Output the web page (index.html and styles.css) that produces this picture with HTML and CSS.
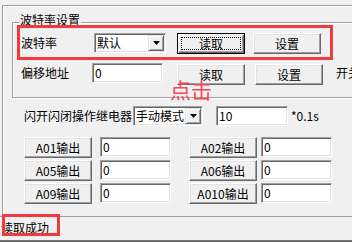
FILE: index.html
```html
<!DOCTYPE html>
<html>
<head>
<meta charset="utf-8">
<link rel="stylesheet" href="styles.css">
</head>
<body>
<div class="frame">
  <div class="group">
    <div class="legend">波特率设置</div>
    <div class="row baud">
      <span class="label label-baud">波特率</span>
      <div class="combo combo-baud"><span class="combo-text">默认</span><span class="drop"><svg width="7" height="4" viewBox="0 0 7 4"><polygon points="0,0 7,0 3.5,4" fill="#000"/></svg></span></div>
      <button class="btn btn-default btn-read1">读取</button>
      <button class="btn btn-set1">设置</button>
    </div>
    <div class="row offset">
      <span class="label label-offset">偏移地址</span>
      <div class="edit edit-offset">0</div>
      <button class="btn btn-read2">读取</button>
      <button class="btn btn-set2">设置</button>
      <span class="label label-switch">开关</span>
    </div>
  </div>
  <div class="row relay">
    <span class="label label-relay">闪开闪闭操作继电器</span>
    <div class="combo combo-relay"><span class="combo-text">手动模式</span><span class="drop"><svg width="7" height="4" viewBox="0 0 7 4"><polygon points="0,0 7,0 3.5,4" fill="#000"/></svg></span></div>
    <div class="edit edit-time">10</div>
    <span class="unit">*0.1s</span>
  </div>
  <div class="outputs">
    <div class="out-row">
      <button class="btn">A01输出</button><div class="edit out-edit">0</div>
      <button class="btn out-btn2">A02输出</button><div class="edit out-edit2">0</div>
    </div>
    <div class="out-row">
      <button class="btn">A05输出</button><div class="edit out-edit">0</div>
      <button class="btn out-btn2">A06输出</button><div class="edit out-edit2">0</div>
    </div>
    <div class="out-row">
      <button class="btn">A09输出</button><div class="edit out-edit">0</div>
      <button class="btn out-btn2">A010输出</button><div class="edit out-edit2">0</div>
    </div>
  </div>
</div>
<div class="status"><span class="status-text">读取成功</span></div>
<div class="bottom-edge"></div>
<div class="annot-click">点击</div>
<div class="annot-status"></div>
</body>
</html>
```
FILE: styles.css
```css
* { box-sizing: border-box; }
html, body { margin: 0; padding: 0; }
body {
  width: 352px;
  height: 242px;
  overflow: hidden;
  position: relative;
  background: #f0f0f0;
  color: #000;
  font-family: "Noto Sans CJK SC", sans-serif;
  font-size: 12px;
  line-height: 14px;
}
.frame {
  margin: 5px 0 0 2px;
  height: 211px;
  border-top: 1px solid #a0a0a0;
  border-left: 1px solid #a0a0a0;
  box-shadow: inset 1px 1px 0 #fff;
}
.group {
  margin: 16px 0 0 9px;
  width: 400px;
  height: 76px;
  border: 1px solid #a0a0a0;
  box-shadow: inset 1px 1px 0 #fff, 1px 1px 0 #fff;
}
.legend {
  margin: -10px 0 0 6px;
  padding: 0 1px;
  width: fit-content;
  height: 14px;
  background: #f0f0f0;
}
.row { display: flex; }
.label { line-height: 20px; white-space: nowrap; }
.baud {
  margin: 1px 0 0 7px;
  width: 310px;
  height: 29px;
  padding-top: 5px;
  align-items: flex-start;
  outline: 3px solid #f03a3c;
}
.label-baud { width: 74px; padding-left: 1px; }
.combo {
  display: flex;
  height: 20px;
  padding: 1px;
  background: #fff;
  border: 1px solid;
  border-color: #a0a0a0 #fff #fff #a0a0a0;
  box-shadow: inset 1px 1px 0 #696969, inset -1px -1px 0 #e3e3e3;
}
.combo-text { flex: 1; padding-left: 1px; line-height: 16px; white-space: nowrap; overflow: hidden; }
.drop {
  width: 16px;
  height: 16px;
  display: flex;
  align-items: center;
  justify-content: center;
  background: #f0f0f0;
  border: 1px solid;
  border-color: #e3e3e3 #696969 #696969 #e3e3e3;
  box-shadow: inset 1px 1px 0 #fff, inset -1px -1px 0 #a0a0a0;
}
.drop svg { display: block; }
.combo-baud { width: 72px; }
.btn {
  width: 68px;
  height: 21px;
  padding: 0;
  margin: 0;
  font: inherit;
  color: #000;
  background: #f0f0f0;
  border: 1px solid;
  border-color: #fff #696969 #696969 #fff;
  box-shadow: inset -1px -1px 0 #a0a0a0, inset 1px 1px 0 #e3e3e3;
  white-space: nowrap;
}
.btn-default {
  border: 1px solid #000;
  box-shadow: inset 1px 1px 0 #fff, inset -1px -1px 0 #696969, inset -2px -2px 0 #a0a0a0;
  outline: 1px dotted #000;
  outline-offset: -5px;
}
.btn-read1 { margin-left: 11px; }
.btn-set1 { margin-left: 8px; }
.edit {
  height: 20px;
  padding: 0 2px;
  line-height: 18px;
  background: #fff;
  border: 1px solid;
  border-color: #a0a0a0 #fff #fff #a0a0a0;
  box-shadow: inset 1px 1px 0 #696969, inset -1px -1px 0 #e3e3e3;
}
.offset { margin: 6px 0 0 7px; align-items: flex-start; }
.label-offset { width: 72px; padding-left: 1px; }
.edit-offset { width: 71px; }
.btn-read2 { margin: 1px 0 0 14px; }
.btn-set2 { margin: 1px 0 0 10px; }
.label-switch { margin-left: 13px; }
.relay { margin: 8px 0 0 21px; height: 20px; align-items: center; }
.label-relay { width: 109px; }
.combo-relay { width: 70px; }
.edit-time { width: 72px; margin-left: 13px; }
.unit { margin-left: 3px; line-height: 20px; }
.outputs { margin: 11px 0 0 21px; display: flex; flex-direction: column; gap: 2px; }
.out-row { display: flex; align-items: flex-start; height: 21px; }
.out-edit { width: 71px; margin-left: 8px; }
.out-btn2 { margin-left: 18px; }
.out-edit2 { width: 71px; margin-left: 4px; }
.status {
  height: 24px;
  border-top: 1px solid #a0a0a0;
  padding: 4px 0 0 1px;
}
.bottom-edge { height: 2px; background: linear-gradient(#8a8a8a, #4a4a4a); }
.annot-click {
  position: absolute;
  left: 170px;
  top: 77px;
  font-size: 21px;
  line-height: 24px;
  color: #f5475a;
}
.annot-status {
  position: absolute;
  left: 2px;
  top: 214px;
  width: 58px;
  height: 22px;
  border: 3px solid #f03a3c;
}
```
